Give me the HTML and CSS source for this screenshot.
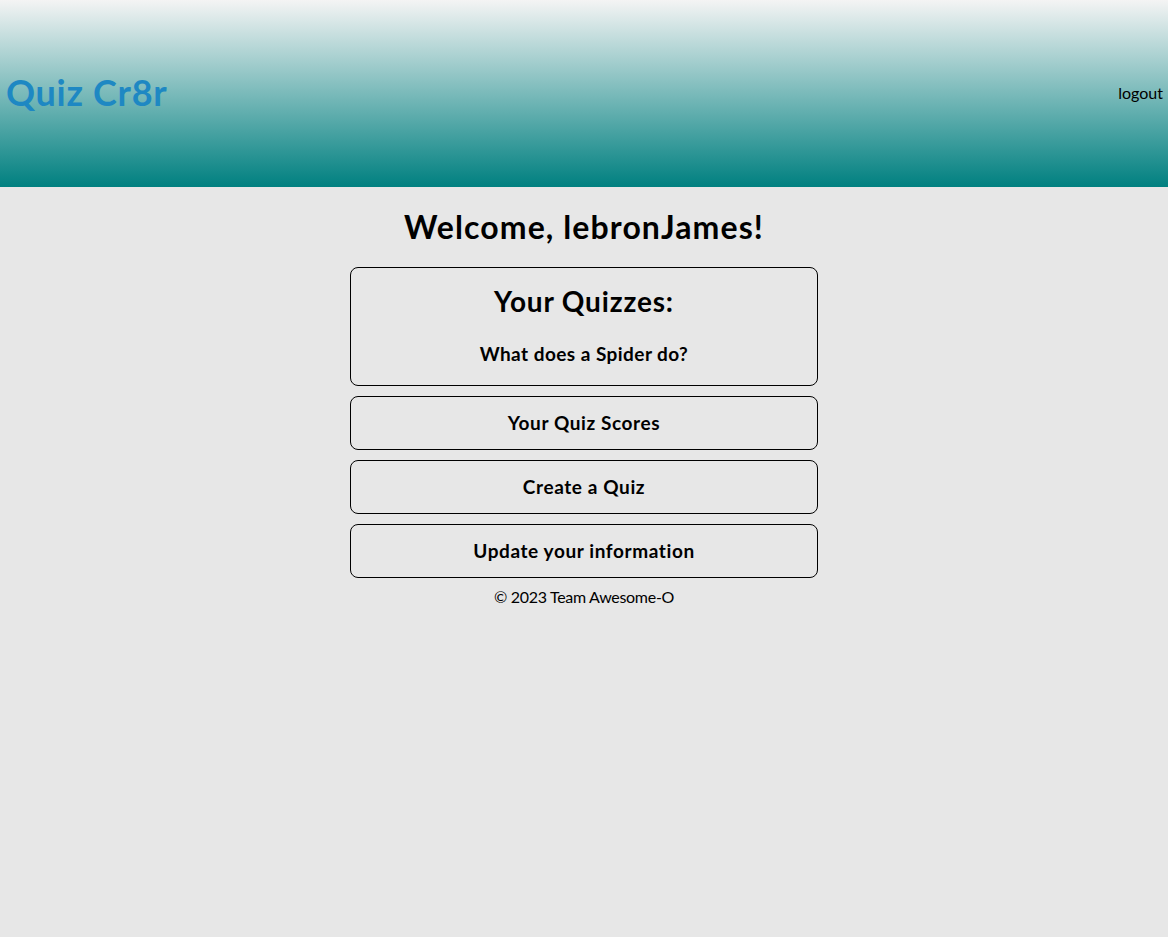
FILE: index.html
```html
<!DOCTYPE html>
<html lang="en">
<head>
<meta charset="utf-8">
<title>Quiz Cr8r</title>
<link rel="stylesheet" href="styles.css">
</head>
<body>
<header class="site-header">
  <h1 class="brand">Quiz Cr8r</h1>
  <a class="logout" href="#">logout</a>
</header>
<main class="dashboard">
  <h1 class="welcome">Welcome, lebronJames!</h1>
  <section class="card card-quizzes">
    <h2 class="card-title">Your Quizzes:</h2>
    <a class="quiz-link" href="#">What does a Spider do?</a>
  </section>
  <a class="card card-link" href="#">Your Quiz Scores</a>
  <a class="card card-link" href="#">Create a Quiz</a>
  <a class="card card-link" href="#">Update your information</a>
  <footer class="site-footer">© 2023 Team Awesome-O</footer>
</main>
</body>
</html>
```
FILE: styles.css
```css
html, body {
  margin: 0;
  padding: 0;
}
body {
  background: #e7e7e7;
  font-family: "Lato", "Open Sans", sans-serif;
  color: #000;
  min-height: 937px;
}
.site-header {
  height: 187px;
  display: flex;
  align-items: center;
  justify-content: space-between;
  padding: 0 5px 0 6px;
  background: linear-gradient(#f4f4f4, #008080);
}
.brand {
  margin: 0 0 4px;
  font-size: 36px;
  line-height: 40px;
  font-weight: 700;
  letter-spacing: 0.7px;
  color: #1e88c3;
}
.logout {
  color: #000;
  text-decoration: none;
  font-size: 16px;
  margin-bottom: 2px;
}
.dashboard {
  width: 468px;
  margin: 0 auto;
  display: flex;
  flex-direction: column;
  gap: 10px;
  text-align: center;
}
.welcome {
  margin: 21px 0 12px;
  font-size: 32px;
  line-height: 37px;
  font-weight: 700;
  letter-spacing: 1.1px;
}
.card {
  box-sizing: border-box;
  border: 1px solid #000;
  border-radius: 8px;
  color: #000;
  text-decoration: none;
  font-weight: 700;
}
.card-quizzes {
  display: flex;
  flex-direction: column;
  padding: 16px 0 19px;
}
.card-title {
  margin: 0 0 24px;
  font-size: 28px;
  line-height: 34px;
  letter-spacing: 0.85px;
}
.quiz-link {
  color: #000;
  text-decoration: none;
  font-size: 19px;
  line-height: 24px;
  letter-spacing: 0.45px;
}
.card-link {
  display: block;
  padding: 14px 0;
  font-size: 19px;
  line-height: 24px;
  letter-spacing: 0.6px;
}
.site-footer {
  font-size: 16px;
  line-height: 18px;
  margin-top: 0;
  letter-spacing: -0.3px;
}
```
